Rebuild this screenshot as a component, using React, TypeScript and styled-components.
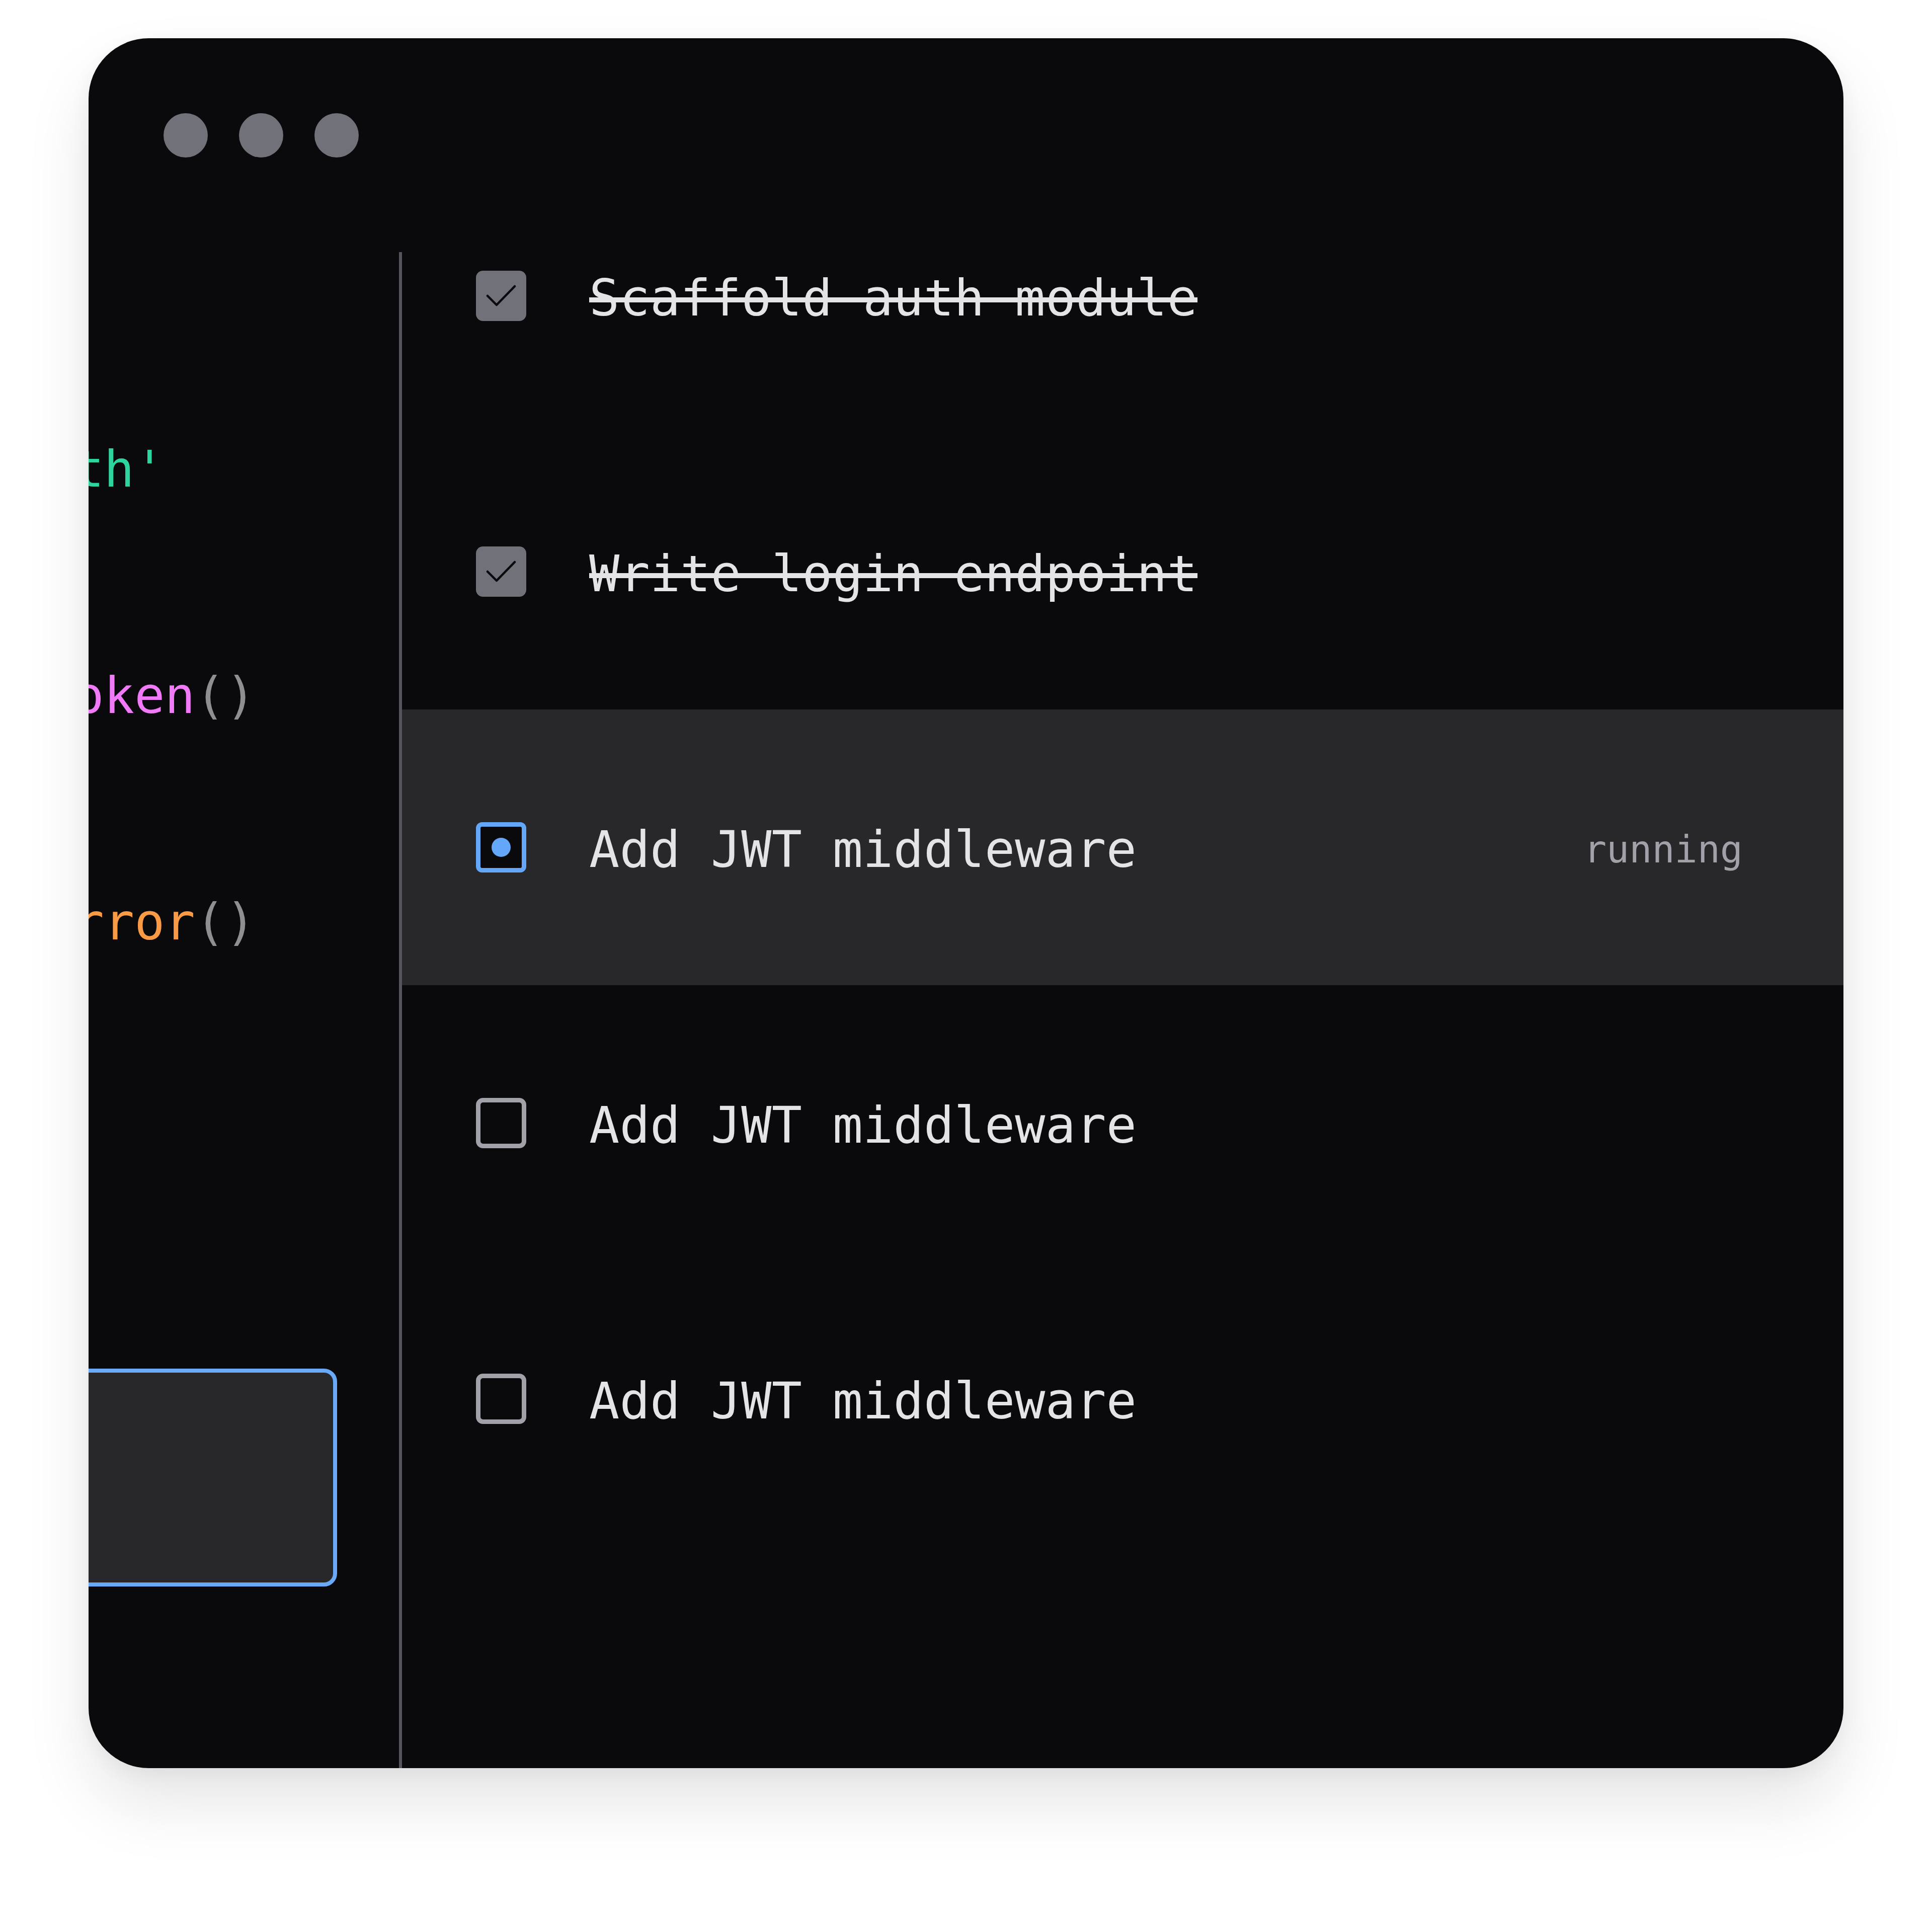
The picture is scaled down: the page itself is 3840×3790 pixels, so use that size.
import React from "react";
import styled, { createGlobalStyle, css } from "styled-components";

const GlobalStyle = createGlobalStyle`
  html, body {
    margin: 0;
    padding: 0;
    background: #ffffff;
  }
  * { box-sizing: border-box; }
`;

const MONO = `"DejaVu Sans Mono", "Liberation Mono", monospace`;

const Page = styled.div`
  padding: 76px 176px;
  min-height: 3790px;
  background: #ffffff;
`;

const Window = styled.div`
  width: 3488px;
  height: 3438px;
  background: #0a0a0c;
  border-radius: 120px;
  overflow: hidden;
  display: flex;
  flex-direction: column;
  box-shadow: 0 70px 130px rgba(0, 0, 0, 0.1), 0 10px 40px rgba(0, 0, 0, 0.05);
`;

const TitleBar = styled.div`
  flex-shrink: 0;
  height: 238px;
  padding: 149px 0 0 149px;
  display: flex;
  gap: 62px;
  align-items: flex-start;
`;

const Dot = styled.span`
  width: 88px;
  height: 88px;
  border-radius: 50%;
  background: #71717a;
`;

const Body = styled.div`
  flex: 1;
  min-height: 0;
  display: flex;
`;

const CodePane = styled.div`
  width: 617px;
  flex-shrink: 0;
  display: flex;
  flex-direction: column;
  align-items: flex-start;
`;

const Code = styled.pre`
  margin: 0 0 0 -1598px;
  padding-top: 244px;
  width: max-content;
  font-family: ${MONO};
  font-size: 100px;
  letter-spacing: 0.12px;
  line-height: 150px;
  color: #e4e4e7;
  white-space: pre;
`;

const Line = styled.div`
  height: 150px;
`;

type Tone = "kw" | "str" | "fn" | "cls" | "punc" | "plain";

const toneColor: Record<Tone, string> = {
  kw: "#c084fc",
  str: "#2dd49f",
  fn: "#f07af8",
  cls: "#fb9a45",
  punc: "#8e8e93",
  plain: "#e4e4e7",
};

const Tok = styled.span<{ $tone: Tone }>`
  color: ${(p) => toneColor[p.$tone]};
`;

const Composer = styled.div`
  margin-top: auto;
  margin-bottom: 361px;
  margin-left: -120px;
  width: 614px;
  height: 433px;
  flex-shrink: 0;
  background: #28282b;
  border: 8px solid #6aa8f8;
  border-radius: 26px;
`;

const Divider = styled.div`
  width: 6px;
  flex-shrink: 0;
  margin-top: 187px;
  background: #55555e;
`;

const TaskList = styled.div`
  flex: 1;
  display: flex;
  flex-direction: column;
`;

const TaskRow = styled.div<{ $active?: boolean }>`
  height: 548px;
  flex-shrink: 0;
  display: flex;
  align-items: center;
  gap: 125px;
  padding: 0 200px 0 147px;
  background: ${(p) => (p.$active ? "#28282b" : "transparent")};
`;

type BoxState = "done" | "running" | "todo";

const Box = styled.span<{ $state: BoxState }>`
  width: 100px;
  height: 100px;
  flex-shrink: 0;
  border-radius: 14px;
  display: flex;
  align-items: center;
  justify-content: center;
  ${(p) =>
    p.$state === "done"
      ? css`
          background: #71717a;
        `
      : p.$state === "running"
      ? css`
          border: 9px solid #64a7f8;
          background: #0a0a0c;
          border-radius: 12px;
        `
      : css`
          border: 9px solid #a1a1aa;
          background: transparent;
        `}
`;

const RunDot = styled.span`
  width: 38px;
  height: 38px;
  border-radius: 50%;
  background: #64a7f8;
`;

const Label = styled.span<{ $done?: boolean }>`
  font-family: ${MONO};
  font-size: 100px;
  letter-spacing: 0.25px;
  line-height: 1;
  padding-top: 9px;
  color: #e4e4e7;
  white-space: pre;
  text-decoration: ${(p) => (p.$done ? "line-through" : "none")};
  text-decoration-color: #e4e4e7;
`;

const Status = styled.span`
  margin-left: auto;
  font-family: ${MONO};
  font-size: 75px;
  line-height: 1;
  padding-top: 9px;
  color: #a1a1aa;
`;

const CheckMark = () => (
  <svg width="100" height="100" viewBox="0 0 100 100" fill="none">
    <path
      d="M23 50 L41 68 L77 31"
      stroke="#0a0a0c"
      strokeWidth="4.5"
      strokeLinecap="round"
      strokeLinejoin="round"
    />
  </svg>
);

type Task = { title: string; state: BoxState; status?: string };

const tasks: Task[] = [
  { title: "Scaffold auth module", state: "done" },
  { title: "Write login endpoint", state: "done" },
  { title: "Add JWT middleware", state: "running", status: "running" },
  { title: "Add JWT middleware", state: "todo" },
  { title: "Add JWT middleware", state: "todo" },
];

const codeLines: Array<Array<[Tone, string]>> = [
  [["punc", "// auth guard"]],
  [],
  [
    ["kw", "import"],
    ["plain", " { auth } "],
    ["kw", "from"],
    ["plain", " "],
    ["str", "'./auth'"],
  ],
  [],
  [
    ["kw", "async function"],
    ["plain", " guard() {"],
  ],
  [
    ["plain", "  "],
    ["kw", "const"],
    ["plain", " token = "],
    ["kw", "await"],
    ["plain", " "],
    ["fn", "getToken"],
    ["punc", "()"],
  ],
  [
    ["plain", "  "],
    ["kw", "const"],
    ["plain", " ok = verify(token)"],
  ],
  [],
  [
    ["plain", "  "],
    ["kw", "if"],
    ["plain", " (!ok) "],
    ["kw", "throw new"],
    ["plain", " "],
    ["cls", "AuthError"],
    ["punc", "()"],
  ],
  [
    ["plain", "  "],
    ["kw", "return"],
    ["plain", " token"],
  ],
  [["plain", "}"]],
];

export default function App() {
  return (
    <>
      <GlobalStyle />
      <Page>
        <Window>
          <TitleBar>
            <Dot />
            <Dot />
            <Dot />
          </TitleBar>
          <Body>
            <CodePane>
              <Code>
                {codeLines.map((line, i) => (
                  <Line key={i}>
                    {line.map(([tone, text], j) => (
                      <Tok key={j} $tone={tone}>
                        {text}
                      </Tok>
                    ))}
                  </Line>
                ))}
              </Code>
              <Composer />
            </CodePane>
            <Divider />
            <TaskList>
              {tasks.map((t, i) => (
                <TaskRow key={i} $active={t.state === "running"}>
                  <Box $state={t.state}>
                    {t.state === "done" && <CheckMark />}
                    {t.state === "running" && <RunDot />}
                  </Box>
                  <Label $done={t.state === "done"}>{t.title}</Label>
                  {t.status && <Status>{t.status}</Status>}
                </TaskRow>
              ))}
            </TaskList>
          </Body>
        </Window>
      </Page>
    </>
  );
}
